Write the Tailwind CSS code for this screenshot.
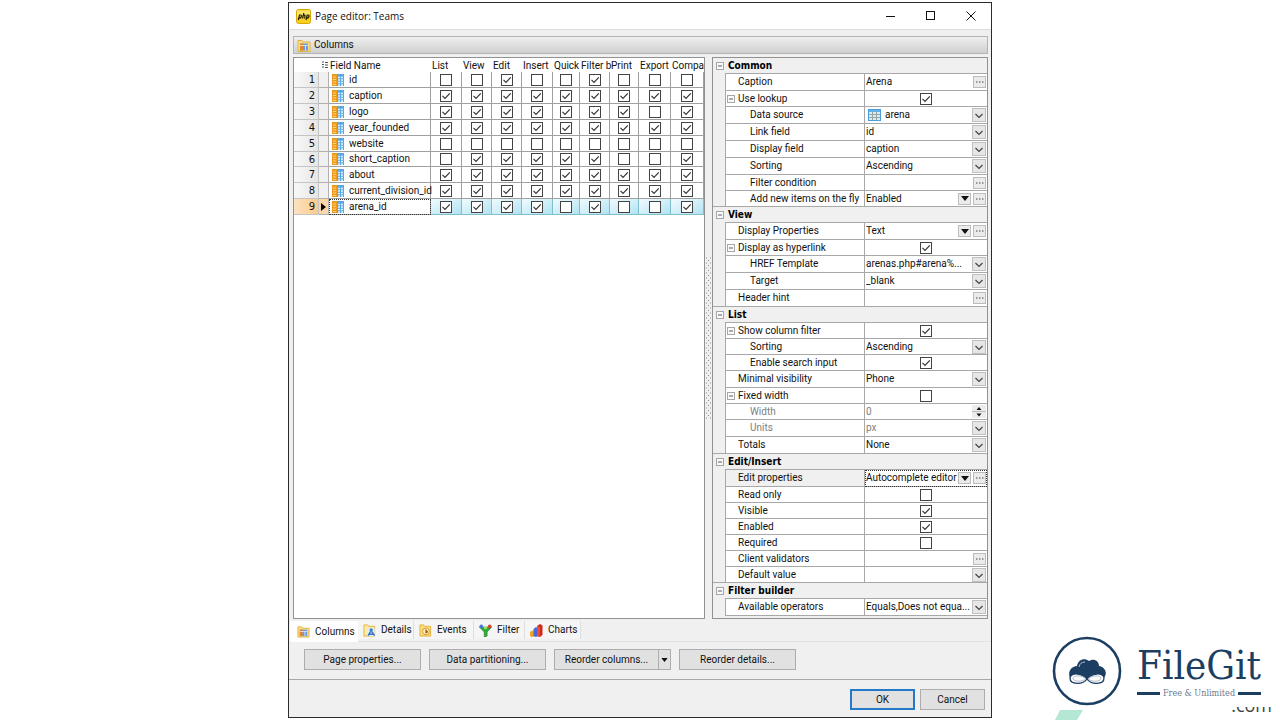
<!DOCTYPE html>
<html lang="en">
<head>
<meta charset="utf-8">
<title>Page editor: Teams</title>
<script src="https://cdn.jsdelivr.net/npm/@tailwindcss/browser@4"></script>
</head>
<body class="relative min-h-screen overflow-x-hidden bg-white pt-[2px] font-['Roboto','Open_Sans',sans-serif] text-[10px] leading-[14px] text-[#111]">

<svg class="hidden" aria-hidden="true">
  <symbol id="i-field" viewBox="0 0 12 12"><rect width="12" height="12" fill="#5aa9e2"/><rect width="5" height="12" fill="#f09a1a"/><path d="M1 3h3M1 5.500h3M1 8h3M1 10.500h3" stroke="#ffd08a"/><path d="M6 3.500h2M9 3.500h2M6 6h2M9 6h2M6 8.500h2M9 8.500h2M6 11h2M9 11h2" stroke="#e4f3fd" stroke-width="1.500"/></symbol>
  <symbol id="i-table" viewBox="0 0 13 12"><rect x=".5" y=".5" width="12" height="11" fill="#d6ecfa" stroke="#4a9fdc"/><path d="M1 2h11" stroke="#62b2ea" stroke-width="2"/><path d="M4.500 3v8M8.500 3v8M1 5.500h11M1 8.500h11" stroke="#9aa69c"/></symbol>
  <symbol id="i-columns" viewBox="0 0 14 13"><path d="M1 1.500h4l1 1.500h7v9.500H1z" fill="#fbe08a" stroke="#e3b23c"/><rect x="3" y="4.500" width="8" height="7" fill="#6b9ae0"/><rect x="3" y="4.500" width="3" height="7" fill="#e8852b"/><path d="M3 6.500h8M8.500 6.500v5" stroke="#fff" stroke-width=".7"/></symbol>
  <symbol id="i-details" viewBox="0 0 14 13"><path d="M1 .5h4L6 2h6.500v10.500H1z" fill="#fdeaa5" stroke="#e3b23c"/><rect x="5" y="4" width="7.500" height="8.500" fill="#e2effc"/><circle cx="8.800" cy="5.800" r="1.800" fill="#3c80cf"/><path d="M5.500 12l2.300-4h2L12.500 12M7 10.500h4" fill="none" stroke="#3473c4" stroke-width="1.500"/></symbol>
  <symbol id="i-events" viewBox="0 0 14 13"><path d="M1 .5h4L6 2h6.500v10.500H1z" fill="#fbdc78" stroke="#e3b23c"/><circle cx="7.500" cy="7.500" r="3.700" fill="#fff0b5" stroke="#d99a30"/><path d="M7 4.500l3 3.500-3 2z" fill="#9a531c"/></symbol>
  <symbol id="i-filter" viewBox="0 0 14 14"><path d="M.5 3.500h13L8.700 8.500V13l-3 1V8.500z" fill="#2fae3a" stroke="#1b7d28" stroke-width=".7"/><circle cx="2.500" cy="2.500" r="2" fill="#4a79d8"/><circle cx="7" cy="4" r="1.700" fill="#9be06a"/><circle cx="11.500" cy="2.500" r="2" fill="#d8442c"/></symbol>
  <symbol id="i-charts" viewBox="0 0 13 13"><path d="M0 8l2-1.500 2 1v5L1.500 13 0 12z" fill="#f0a429"/><path d="M3.500 5L6 3l2 1.500V12l-2 1-2.500-1z" fill="#4a67d6"/><path d="M7 2l3-2 2.500 1.500V11L10 13l-3-1z" fill="#d1281c"/><path d="M7 2l3 1.200V13l-3-1z" fill="#ee4a3b"/></symbol>
  <symbol id="i-check" viewBox="0 0 12 12"><path d="M2.500 5.800L5 8.300 9.800 3.300" fill="none" stroke="#333" stroke-width="1.200"/></symbol>
  <symbol id="i-minus" viewBox="0 0 8 8"><rect x=".5" y=".5" width="7" height="7" fill="#fafafa" stroke="#a6a6a6"/><path d="M2 4h4" stroke="#5a5a7a"/></symbol>
  <symbol id="i-down" viewBox="0 0 8 5"><path d="M0 0h8L4 5z" fill="#111"/></symbol>
</svg>

<main class="mx-auto w-[55%] min-w-[704px] border border-[#2b2b2b] bg-[#f0f0f0]">
  <header class="flex h-[27px] items-center border-b border-[#dcdcdc] bg-white pl-[7px]">
    <svg class="h-[15px] w-[15px]" viewBox="0 0 15 15" aria-hidden="true"><rect x=".5" y=".5" width="14" height="14" rx="2" fill="#f7cf1e" stroke="#d9a800"/><path d="M1 1.500h13v4L1 9z" fill="#fde56a"/><g fill="none" stroke="#2a2205" stroke-width="1.200"><path d="M2.300 11l1.200-5h1.300q1 .3.500 1.800T3 9.300M6.500 9.500l1.300-5.500M7.300 6.500q2-1 1.700.6L8.500 9.500M10 11l1.200-5h1.200q1 .3.500 1.800t-2.200 1.500"/></g></svg>
    <h1 class="ml-1 flex-1 font-['Open_Sans',sans-serif]">Page editor: Teams</h1>
    <button class="flex h-6 w-10 items-center justify-center" aria-label="Minimize"><svg class="h-[10px] w-[10px]" viewBox="0 0 10 10"><path d="M0 5.500h9" stroke="#111"/></svg></button>
    <button class="flex h-6 w-10 items-center justify-center" aria-label="Maximize"><svg class="h-[10px] w-[10px]" viewBox="0 0 10 10"><rect x=".5" y=".5" width="8" height="8" fill="none" stroke="#111"/></svg></button>
    <button class="flex h-6 w-10 items-center justify-center" aria-label="Close"><svg class="h-[10px] w-[10px]" viewBox="0 0 10 10"><path d="M.5.500l9 9M9.500.500l-9 9" stroke="#111"/></svg></button>
  </header>

  <div class="pt-[6px] pr-[3px] pl-1">
    <div class="flex h-[18px] items-center gap-[3px] border border-[#b4b4b4] bg-linear-to-b from-[#f0f0f0] to-[#cfcfcf] pl-[3px]">
      <svg class="h-[13px] w-[14px]" aria-hidden="true"><use href="#i-columns"/></svg><h2>Columns</h2>
    </div>

    <div class="mt-[3px] flex">
      <section class="min-w-0 flex-1 border border-[#929292] bg-white">
        <table class="w-full table-fixed border-separate border-spacing-0">
          <colgroup><col class="w-[25px]"><col class="w-[10px]"><col class="w-[102px]"><col class="w-[31px]"><col class="w-[30px]"><col class="w-[30px]"><col class="w-[31px]"><col class="w-[27px]"><col class="w-[30px]"><col class="w-[29px]"><col class="w-[32px]"><col></colgroup>
          <thead><tr id="head" class="h-[14px] text-left"></tr></thead>
          <tbody id="fields"></tbody>
        </table>
      </section>
      <div class="flex w-[7px] items-center justify-center">
        <svg class="h-[163px] w-[5px]" aria-hidden="true"><defs><pattern id="dots" width="4" height="5" patternUnits="userSpaceOnUse"><path d="M0 1h1M2 3.500h1" stroke="#8c8c8c" stroke-width="1"/></pattern></defs><rect width="5" height="163" fill="url(#dots)"/></svg>
      </div>
      <section id="props" class="w-[276px] border border-[#929292] bg-[#f0f0f0] pb-[2px]"></section>
    </div>
  </div>

  <nav class="flex h-[22px] items-start pt-[2px] pl-px" id="tabs"></nav>

  <div class="flex gap-2 border-t border-[#e2e2e2] px-[15px] pt-[7px] pb-[9px]">
    <button class="h-[21px] w-[117px] border border-[#adadad] bg-[#e1e1e1]">Page properties...</button>
    <button class="h-[21px] w-[117px] border border-[#adadad] bg-[#e1e1e1]">Data partitioning...</button>
    <div class="flex h-[21px] w-[117px] border border-[#adadad] bg-[#e1e1e1]">
      <button class="flex-1">Reorder columns...</button>
      <button class="flex w-[12px] items-center justify-center border-l border-[#adadad]" aria-label="More reorder options"><svg class="h-1 w-[7px]" viewBox="0 0 8 5"><use href="#i-down"/></svg></button>
    </div>
    <button class="h-[21px] w-[117px] border border-[#adadad] bg-[#e1e1e1]">Reorder details...</button>
  </div>

  <footer class="flex justify-end gap-[5px] border-t border-[#a8a8a8] pt-[9px] pr-[6px] pb-[7px]">
    <button class="h-[21px] w-[65px] border-2 border-[#2479c9] bg-[#e1e1e1]">OK</button>
    <button class="h-[21px] w-[65px] border border-[#adadad] bg-[#e1e1e1]">Cancel</button>
  </footer>
</main>

<aside class="absolute right-[19px] bottom-[14px] flex items-center gap-[15px] text-[#1d3e63]">
  <svg class="h-[70px] w-[70px]" viewBox="0 0 70 70" aria-hidden="true"><circle cx="35" cy="35" r="33" fill="none" stroke="currentColor" stroke-width="2.600"/><path d="M18 42C15 35 20 30 25 30 26 24 32 21 37 25 42 22 47 25 47 30 53 31 56 37 52 42L43 40 35 44 27 40z" fill="currentColor"/><path d="M27 31q1-5 6-5" fill="none" stroke="#cfd8e2" stroke-width=".8"/><path d="M35 43C31 37 19 36 18 42 18 49 31 49 35 43 39 37 51 36 52 42 52 49 39 49 35 43z" fill="#fff" stroke="currentColor" stroke-width="1.300"/><path d="M34 43C30 39 21 39 21 42.500 22 46 30 46 34 43M36 43C40 39 49 39 49 42.500 48 46 40 46 36 43" fill="none" stroke="#8a9bb0" stroke-width=".7"/></svg>
  <div class="w-[124px] font-['DejaVu_Serif_Condensed','DejaVu_Serif',serif]">
    <div class="text-[40px] leading-[44px]">FileGit</div>
    <div class="flex items-center justify-between text-[9px] leading-[12px] whitespace-nowrap text-[#6d7c90]"><span class="h-[3px] w-[23px] bg-[#1d3e63]"></span>Free &amp; Unlimited<span class="h-[3px] w-[23px] bg-[#1d3e63]"></span></div>
  </div>
</aside>
<div class="absolute right-[8px] bottom-[8px] flex h-[5px] items-end overflow-hidden font-['Open_Sans',sans-serif] text-[18px] leading-[14px] text-[#444]">.com</div>
<svg class="absolute right-[197px] bottom-0 h-[10px] w-[28px]" viewBox="0 0 28 10" aria-hidden="true"><path d="M5 0h23l-6 10H0z" fill="#b4e8d5"/></svg>

<script>
const check = (on, name) => `<span class="relative block h-3 w-3"><input type="checkbox" aria-label="${name}" class="peer block h-3 w-3 appearance-none border border-[#444] bg-white" ${on ? 'checked' : ''}><svg class="pointer-events-none absolute inset-0 hidden h-3 w-3 peer-checked:block"><use href="#i-check"/></svg></span>`;

const cols = ['List', 'View', 'Edit', 'Insert', 'Quick', 'Filter b', 'Print', 'Export', 'Compa'];
document.getElementById('head').innerHTML =
  `<th></th><th><svg class="ml-[2px] h-2 w-2" viewBox="0 0 8 8"><path d="M1 1h2M1 3.500h2M1 6h2M4 1.500h3M4 4h3M4 6.500h3" stroke="#555"/></svg></th><th class="pt-px pl-px leading-[13px] font-normal">Field Name</th>` +
  cols.map(c => `<th class="pt-px pl-px leading-[13px] font-normal whitespace-nowrap">${c}</th>`).join('');

const fields = [
  ['id', '001001000'], ['caption', '111111111'], ['logo', '111111101'], ['year_founded', '111111111'], ['website', '000000000'],
  ['short_caption', '011111001'], ['about', '111111111'], ['current_division_id', '111111111'], ['arena_id', '111101001']
];
document.getElementById('fields').innerHTML = fields.map(([name, flags], i) => {
  const last = i === 8;
  const h = i === 5 ? 'h-[15px]' : 'h-4';
  return `<tr class="${h}">
    <td class="border-r border-b border-[#c4c4c4] pr-[3px] text-right font-['DejaVu_Sans',sans-serif] leading-[13px] ${last ? 'bg-linear-to-r from-[#fde3c0] to-[#fbc98c]' : 'bg-linear-to-r from-[#f8f8f8] to-[#e6e6e6]'}">${i + 1}</td>
    <td class="border-r border-b border-[#b0b0b0] ${last ? 'bg-[#fbd7a8]' : 'bg-[#f0f0f0]'}">${last ? '<svg class="ml-[2px] h-2 w-[5px]" viewBox="0 0 5 8"><path d="M0 0l5 4-5 4z" fill="#000"/></svg>' : ''}</td>
    <td class="border-r border-b border-[#a0a0a0] ${last ? 'outline outline-dotted -outline-offset-1 outline-[#333]' : ''}"><div class="flex h-[14px] items-center gap-[5px] pl-[3px] whitespace-nowrap"><svg class="h-3 w-3 shrink-0"><use href="#i-field"/></svg>${name}</div></td>` +
    [...flags].map((f, c) => `<td class="border-r border-b ${last ? 'border-[#7fc0cc] bg-linear-to-br from-[#f0fbfe] to-[#b2e3f2]' : 'border-[#a0a0a0]'}"><div class="flex h-[14px] items-center justify-center">${check(f === '1', name + ' ' + cols[c])}</div></td>`).join('') + '</tr>';
}).join('');

/* Property rows: [kind, label, value, indent, tall row, collapsible] */
const props = [
  ['head', 'Common'], ['dots', 'Caption', 'Arena', 0, 1], ['check', 'Use lookup', 1, 0, 0, 1], ['select', 'Data source', 'arena', 1, 1], ['select', 'Link field', 'id', 1, 1],
  ['select', 'Display field', 'caption', 1, 1], ['select', 'Sorting', 'Ascending', 1, 1], ['dots', 'Filter condition', '', 1, 0], ['both', 'Add new items on the fly', 'Enabled', 1, 0],
  ['head', 'View'], ['both', 'Display Properties', 'Text', 0, 1], ['check', 'Display as hyperlink', 1, 0, 0, 1], ['select', 'HREF Template', 'arenas.php#arena%...', 1, 1], ['select', 'Target', '_blank', 1, 1], ['dots', 'Header hint', '', 0, 1],
  ['head', 'List'], ['check', 'Show column filter', 1, 0, 0, 1], ['select', 'Sorting', 'Ascending', 1, 0], ['check', 'Enable search input', 1, 1, 0], ['select', 'Minimal visibility', 'Phone', 0, 1], ['check', 'Fixed width', 0, 0, 0, 1],
  ['spin', 'Width', '0', 1, 0], ['select', 'Units', 'px', 1, 1], ['select', 'Totals', 'None', 0, 1],
  ['head', 'Edit/Insert'], ['both', 'Edit properties', 'Autocomplete editor', 0, 1], ['check', 'Read only', 0, 0, 0], ['check', 'Visible', 1, 0, 0], ['check', 'Enabled', 1, 0, 0], ['check', 'Required', 0, 0, 0], ['dots', 'Client validators', '', 0, 0], ['select', 'Default value', '', 0, 0],
  ['head', 'Filter builder'], ['select', 'Available operators', 'Equals,Does not equa...', 0, 1]
];
const minus = '<svg class="h-2 w-2 shrink-0"><use href="#i-minus"/></svg>';
const more = '<button class="mr-px flex h-3 w-[13px] shrink-0 items-center justify-center border border-[#bcbcbc] bg-[#ebebeb]" aria-label="More"><svg class="h-[2px] w-2" viewBox="0 0 8 2"><path d="M0 1h1.500M3 1h1.500M6 1h1.500" stroke="#444"/></svg></button>';
document.getElementById('props').innerHTML = props.map(([kind, label, value, indent, tall, open], i) => {
  if (kind === 'head') return `<h3 class="flex items-center gap-1 pl-[3px] font-['DejaVu_Sans_Condensed','DejaVu_Sans',sans-serif] font-bold text-black ${i ? '-mt-px h-[17px] border-t border-[#a8a8a8]' : 'h-4'}">${minus}${label}</h3>`;
  const grey = label === 'Width' || label === 'Units';
  const active = label === 'Edit properties';
  const first = props[i - 1][0] === 'head';
  const size = first ? (tall ? '-mt-px h-[18px] border-t' : '-mt-px h-[17px] border-t') : (tall ? 'h-[17px]' : 'h-4');
  const id = 'p' + i;
  let cell;
  if (kind === 'check') cell = `<div class="flex flex-1 justify-center">${check(value, label)}</div>`;
  else if (kind === 'dots') cell = `<input id="${id}" class="h-[14px] min-w-0 flex-1 pl-px" value="${value}">${more}`;
  else if (kind === 'spin') cell = `<input id="${id}" class="h-[14px] min-w-0 flex-1 pl-px" value="${value}"><svg class="mr-px h-[13px] w-[14px] bg-[#ececec]" viewBox="0 0 14 13"><path d="M0 6.500h14" stroke="#bbb"/><path d="M4.500 5L7 2l2.500 3zM4.500 8.500L7 11.500l2.500-3z" fill="#111"/></svg>`;
  else {
    const arrow = kind === 'both'
      ? '<span class="pointer-events-none absolute inset-y-0 right-[2px] my-auto flex h-3 w-[13px] items-center justify-center border border-[#bcbcbc] bg-[#ebebeb]"><svg class="h-[5px] w-2"><use href="#i-down"/></svg></span>'
      : '<svg class="pointer-events-none absolute inset-y-0 right-px my-auto h-[14px] w-[14px] border border-[#c0c0c0] bg-[#e6e6e6]" viewBox="0 0 12 12"><path d="M2.500 5L6 8.500 9.500 5" fill="none" stroke="#444" stroke-width="1.200"/></svg>';
    const icon = label === 'Data source' ? '<svg class="ml-[3px] h-3 w-[13px] shrink-0"><use href="#i-table"/></svg>' : '';
    cell = `${icon}<div class="relative flex h-full min-w-0 flex-1 items-center"><select id="${id}" class="h-[14px] w-full appearance-none ${icon ? 'pl-1' : 'pl-px'}"><option>${value}</option></select>${arrow}</div>${kind === 'both' ? more : ''}`;
  }
  return `<div class="ml-3 flex border-l border-[#a8a8a8] ${size} ${grey ? 'text-[#808080]' : ''}">
    <div class="flex w-[139px] items-center border-r border-b border-[#a8a8a8] ${active ? 'bg-[#f0f0f0]' : 'bg-white'} ${open ? 'gap-[3px] pl-px' : indent ? 'pl-6' : 'pl-3'}">${open ? minus : ''}<label class="whitespace-nowrap" for="${id}">${label}</label></div>
    <div class="flex min-w-0 flex-1 items-center border-b border-[#a8a8a8] bg-white ${active ? 'outline outline-dotted -outline-offset-1 outline-[#333]' : ''}">${cell}</div></div>`;
}).join('');

const tabs = [['Columns', 'i-columns', 'w-[68px]'], ['Details', 'i-details', 'w-[56px]'], ['Events', 'i-events', 'w-[60px]'], ['Filter', 'i-filter', 'w-[51px]'], ['Charts', 'i-charts', 'w-[56px]']];
document.getElementById('tabs').innerHTML = tabs.map(([name, icon, w], i) =>
  `<button class="flex shrink-0 items-center gap-[5px] ${w} ${i ? 'h-[18px] border-r border-[#dedede] bg-[#f5f5f5] pl-[5px]' : 'h-[21px] bg-white pl-[7px]'}"><svg class="h-[13px] w-[13px] shrink-0"><use href="#${icon}"/></svg>${name}</button>`).join('');
</script>
</body>
</html>
